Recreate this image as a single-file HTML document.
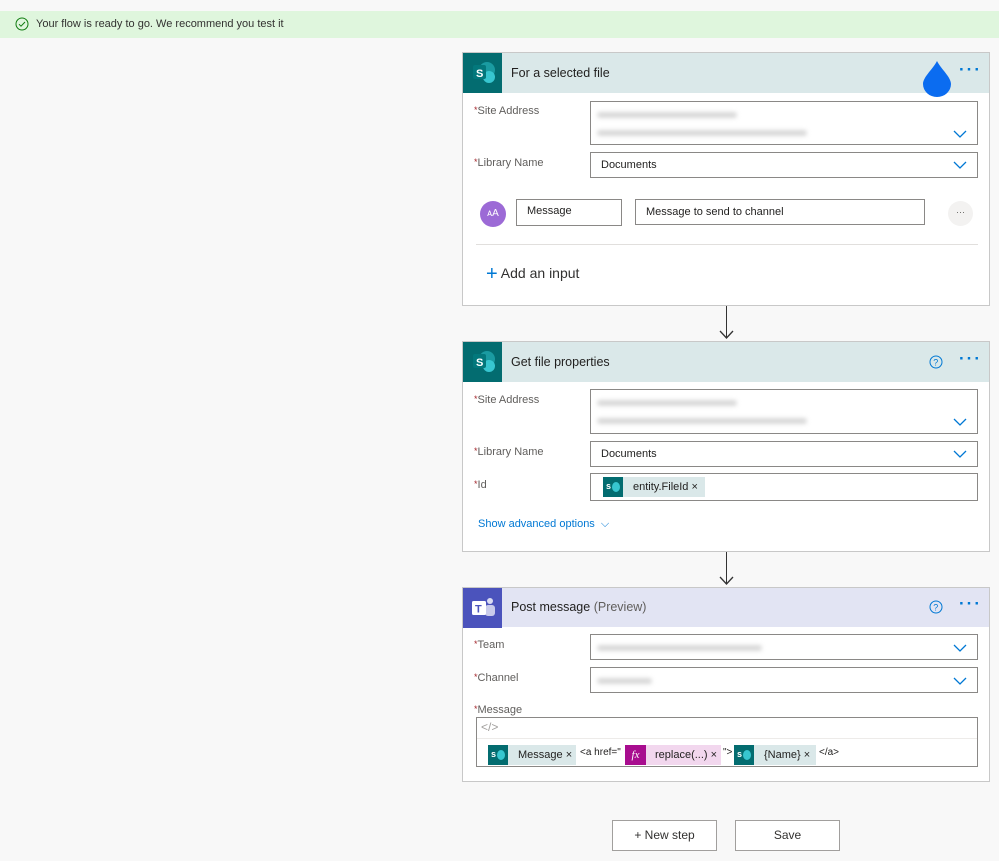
<!DOCTYPE html>
<html><head><style>
*{box-sizing:border-box;margin:0;padding:0}
body{width:999px;height:861px;background:#f8f8f8;font-family:"Liberation Sans",sans-serif;position:relative;overflow:hidden;color:#323130}
.a{position:absolute}
.banner{left:0;top:11px;width:999px;height:27px;background:#dff6dd;font-size:11px;line-height:27px;padding-left:36px}
.card{background:#fff;border:1px solid #c8c8c8;left:462px;width:528px}
.hd{position:absolute;left:0;top:0;right:0;height:40px;font-size:12.5px;line-height:40px;padding-left:48px;color:#201f1e}
.ic{position:absolute;left:0;top:0;width:39px;height:40px}
.lbl{position:absolute;font-size:11px;color:#605e5c}
.lbl b{color:#a4262c;font-weight:normal;font-size:9px;vertical-align:top}
.fld{position:absolute;border:1px solid #8a8886;background:#fff;font-size:11px;color:#201f1e;padding-left:10px}
.chev{position:absolute;right:10px;width:14px;height:8px}
.blur{position:absolute;height:6px;background:#d8d8d8;filter:blur(2px);border-radius:3px}
.dots{position:absolute;font-size:17px;color:#0078d4;letter-spacing:2px;font-weight:bold}
.tok{position:absolute;height:20px;font-size:11px;line-height:20px}
.sp{position:absolute;left:0;top:0;width:20px;height:20px;background:#036c70}
.sp:after{content:"";position:absolute;left:9px;top:5px;width:8px;height:10px;border-radius:50%;background:#37c6d0}
.sp:before{content:"s";position:absolute;left:3px;top:-1px;font-size:9px;color:#fff;font-weight:bold;z-index:1}
.btn{position:absolute;top:820px;height:31px;border:1px solid #a19f9d;background:#fff;font-size:12px;text-align:center;line-height:29px}
</style></head><body>
<div class="a banner">Your flow is ready to go. We recommend you test it</div>
<svg class="a" style="left:15px;top:17px" width="14" height="14" viewBox="0 0 14 14"><circle cx="7" cy="7" r="6" fill="none" stroke="#107c10" stroke-width="1"/><path d="M4 7.2l2 2 4-4.2" fill="none" stroke="#107c10"/></svg>

<div class="a card" style="top:52px;height:254px">
 <div class="hd" style="background:#dae8e9">For a selected file</div>
 <svg class="ic" viewBox="0 0 39 40"><rect width="39" height="40" fill="#036c70"/><circle cx="24" cy="17" r="8" fill="#1a9ba1"/><circle cx="26" cy="24" r="6" fill="#37c6d0"/><rect x="10" y="12" width="13" height="14" rx="2" fill="#03787c"/><text x="13" y="24" font-size="11" fill="#fff" font-family="Liberation Sans" font-weight="bold">S</text></svg>
 <svg class="a" style="left:460px;top:8px" width="28" height="36" viewBox="0 0 28 36"><path d="M14 0C10 8 0 16 0 23a14 13 0 0 0 28 0C28 16 18 8 14 0z" fill="#0b6cf0"/></svg>
 <div class="dots" style="left:496px;top:7px">···</div>
 <div class="lbl" style="left:11px;top:52px"><b>*</b>Site Address</div>
 <div class="fld" style="left:127px;top:48px;width:388px;height:44px"><div class="blur" style="left:6px;top:10px;width:140px"></div><div class="blur" style="left:6px;top:28px;width:210px"></div><svg class="chev" style="top:28px" viewBox="0 0 14 8"><path d="M1 1l6 6 6-6" fill="none" stroke="#0078d4" stroke-width="1.3"/></svg></div>
 <div class="lbl" style="left:11px;top:104px"><b>*</b>Library Name</div>
 <div class="fld" style="left:127px;top:99px;width:388px;height:26px;line-height:24px">Documents<svg class="chev" style="top:8px" viewBox="0 0 14 8"><path d="M1 1l6 6 6-6" fill="none" stroke="#0078d4" stroke-width="1.3"/></svg></div>
 <div class="a" style="left:17px;top:148px;width:26px;height:26px;border-radius:50%;background:#9c6ad6;color:#fff;font-size:10px;text-align:center;line-height:26px">ᴀA</div>
 <div class="fld" style="left:53px;top:146px;width:106px;height:27px;line-height:22px">Message</div>
 <div class="fld" style="left:172px;top:146px;width:290px;height:26px;line-height:24px">Message to send to channel</div>
 <div class="a" style="left:485px;top:148px;width:25px;height:25px;border-radius:50%;background:#f3f2f1;font-size:9px;text-align:center;line-height:22px;color:#605e5c">···</div>
 <div class="a" style="left:13px;top:191px;width:502px;height:1px;background:#e1dfdd"></div>
 <div class="a" style="left:23px;top:210px;font-size:14px;color:#323130"><span style="color:#0078d4;font-size:20px;vertical-align:-2px">+</span> Add an input</div>
</div>
<div class="a" style="left:726px;top:306px;width:1px;height:32px;background:#333"></div>
<svg class="a" style="left:719px;top:330px" width="15" height="10"><path d="M1 1l6.5 7 6.5-7" fill="none" stroke="#333" stroke-width="1.3"/></svg>

<div class="a card" style="top:341px;height:211px">
 <div class="hd" style="background:#dae8e9">Get file properties</div>
 <svg class="ic" viewBox="0 0 39 40"><rect width="39" height="40" fill="#036c70"/><circle cx="24" cy="17" r="8" fill="#1a9ba1"/><circle cx="26" cy="24" r="6" fill="#37c6d0"/><rect x="10" y="12" width="13" height="14" rx="2" fill="#03787c"/><text x="13" y="24" font-size="11" fill="#fff" font-family="Liberation Sans" font-weight="bold">S</text></svg>
 <svg class="a" style="left:466px;top:13px" width="14" height="14"><circle cx="7" cy="7" r="6" fill="none" stroke="#0078d4"/><text x="4.3" y="10.5" font-size="9" fill="#0078d4" font-family="Liberation Sans">?</text></svg>
 <div class="dots" style="left:496px;top:7px">···</div>
 <div class="lbl" style="left:11px;top:52px"><b>*</b>Site Address</div>
 <div class="fld" style="left:127px;top:47px;width:388px;height:45px"><div class="blur" style="left:6px;top:10px;width:140px"></div><div class="blur" style="left:6px;top:28px;width:210px"></div><svg class="chev" style="top:28px" viewBox="0 0 14 8"><path d="M1 1l6 6 6-6" fill="none" stroke="#0078d4" stroke-width="1.3"/></svg></div>
 <div class="lbl" style="left:11px;top:104px"><b>*</b>Library Name</div>
 <div class="fld" style="left:127px;top:99px;width:388px;height:26px;line-height:24px">Documents<svg class="chev" style="top:8px" viewBox="0 0 14 8"><path d="M1 1l6 6 6-6" fill="none" stroke="#0078d4" stroke-width="1.3"/></svg></div>
 <div class="lbl" style="left:11px;top:137px"><b>*</b>Id</div>
 <div class="fld" style="left:127px;top:131px;width:388px;height:28px">
  <div class="tok" style="left:12px;top:3px;width:102px;background:#dae8e9;padding-left:30px"><span class="sp"></span>entity.FileId ×</div>
 </div>
 <div class="a" style="left:15px;top:176px;font-size:11px;color:#0078d4">Show advanced options &nbsp;⌵</div>
</div>
<div class="a" style="left:726px;top:552px;width:1px;height:32px;background:#333"></div>
<svg class="a" style="left:719px;top:576px" width="15" height="10"><path d="M1 1l6.5 7 6.5-7" fill="none" stroke="#333" stroke-width="1.3"/></svg>

<div class="a card" style="top:587px;height:195px">
 <div class="hd" style="background:#e2e4f3;height:39px;line-height:39px">Post message <span style="color:#605e5c">(Preview)</span></div>
 <svg class="ic" viewBox="0 0 39 40"><rect width="39" height="40" fill="#4b53bc"/><circle cx="27" cy="13" r="3" fill="#fff" opacity=".8"/><rect x="22" y="17" width="10" height="11" rx="3" fill="#fff" opacity=".7"/><rect x="9" y="13" width="14" height="14" rx="1.5" fill="#fff"/><text x="12" y="24.5" font-size="11" fill="#4b53bc" font-family="Liberation Sans" font-weight="bold">T</text></svg>
 <svg class="a" style="left:466px;top:12px" width="14" height="14"><circle cx="7" cy="7" r="6" fill="none" stroke="#0078d4"/><text x="4.3" y="10.5" font-size="9" fill="#0078d4" font-family="Liberation Sans">?</text></svg>
 <div class="dots" style="left:496px;top:6px">···</div>
 <div class="lbl" style="left:11px;top:51px"><b>*</b>Team</div>
 <div class="fld" style="left:127px;top:46px;width:388px;height:26px"><div class="blur" style="left:6px;top:10px;width:165px"></div><svg class="chev" style="top:9px" viewBox="0 0 14 8"><path d="M1 1l6 6 6-6" fill="none" stroke="#0078d4" stroke-width="1.3"/></svg></div>
 <div class="lbl" style="left:11px;top:84px"><b>*</b>Channel</div>
 <div class="fld" style="left:127px;top:79px;width:388px;height:26px"><div class="blur" style="left:6px;top:10px;width:55px"></div><svg class="chev" style="top:9px" viewBox="0 0 14 8"><path d="M1 1l6 6 6-6" fill="none" stroke="#0078d4" stroke-width="1.3"/></svg></div>
 <div class="lbl" style="left:11px;top:116px"><b>*</b>Message</div>
 <div class="fld" style="left:13px;top:129px;width:502px;height:50px;padding:0">
  <div class="a" style="left:4px;top:2px;font-size:12px;color:#a19f9d">&lt;/&gt;</div>
  <div class="a" style="left:0;top:20px;width:500px;height:1px;background:#edebe9"></div>
  <div class="tok" style="left:11px;top:27px;width:88px;background:#dae8e9;padding-left:30px"><span class="sp"></span>Message ×</div>
  <div class="tok" style="left:103px;top:25px;font-size:10px">&lt;a href="</div>
  <div class="tok" style="left:148px;top:27px;width:96px;background:#f2d7ee;padding-left:30px"><span style="position:absolute;left:0;top:0;width:21px;height:20px;background:#a80d8f;color:#fff;font-style:italic;font-family:'Liberation Serif';text-align:center">fx</span>replace(...) ×</div>
  <div class="tok" style="left:246px;top:25px;font-size:10px">"&gt;</div>
  <div class="tok" style="left:257px;top:27px;width:82px;background:#dae8e9;padding-left:30px"><span class="sp"></span>{Name} ×</div>
  <div class="tok" style="left:342px;top:25px;font-size:10px">&lt;/a&gt;</div>
 </div>
</div>

<div class="btn" style="left:612px;width:105px">+ New step</div>
<div class="btn" style="left:735px;width:105px">Save</div>
</body></html>
